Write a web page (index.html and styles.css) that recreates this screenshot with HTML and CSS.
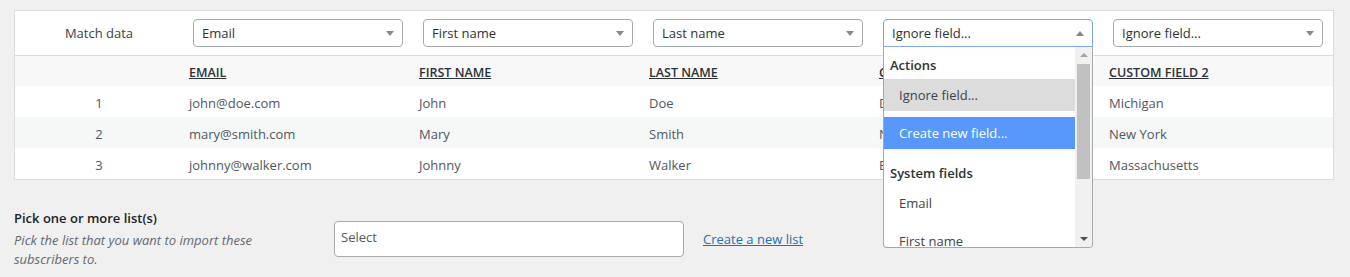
FILE: index.html
```html
<!DOCTYPE html>
<html lang="en">
<head>
  <meta charset="UTF-8">
  <title>Import subscribers</title>
  <link rel="stylesheet" href="styles.css">
</head>
<body>
  <div class="match-card">
    <table class="match-table">
      <colgroup>
        <col class="col-num">
        <col><col><col><col><col>
      </colgroup>
      <thead>
        <tr class="match-row">
          <th class="num">Match data</th>
          <th><div class="field-select">Email<span class="caret"></span></div></th>
          <th><div class="field-select">First name<span class="caret"></span></div></th>
          <th><div class="field-select">Last name<span class="caret"></span></div></th>
          <th>
            <div class="select-wrap">
              <div class="field-select open">Ignore field...<span class="caret up"></span></div>
              <div class="dropdown">
                <ul class="options">
                  <li class="group">Actions</li>
                  <li class="option selected">Ignore field...</li>
                  <li class="option hover">Create new field...</li>
                  <li class="group">System fields</li>
                  <li class="option">Email</li>
                  <li class="option">First name</li>
                  <li class="option">Last name</li>
                </ul>
                <div class="scrollbar">
                  <span class="arrow up"></span>
                  <span class="thumb"></span>
                  <span class="arrow down"></span>
                </div>
              </div>
            </div>
          </th>
          <th><div class="field-select">Ignore field...<span class="caret"></span></div></th>
        </tr>
        <tr class="head-row">
          <th></th>
          <th><span class="col-name">Email</span></th>
          <th><span class="col-name">First name</span></th>
          <th><span class="col-name">Last name</span></th>
          <th><span class="col-name">Custom field 1</span></th>
          <th><span class="col-name">Custom field 2</span></th>
        </tr>
      </thead>
      <tbody>
        <tr>
          <td class="num">1</td>
          <td>john@doe.com</td>
          <td>John</td>
          <td>Doe</td>
          <td>Detroit</td>
          <td>Michigan</td>
        </tr>
        <tr class="alt">
          <td class="num">2</td>
          <td>mary@smith.com</td>
          <td>Mary</td>
          <td>Smith</td>
          <td>New York City</td>
          <td>New York</td>
        </tr>
        <tr>
          <td class="num">3</td>
          <td>johnny@walker.com</td>
          <td>Johnny</td>
          <td>Walker</td>
          <td>Boston</td>
          <td>Massachusetts</td>
        </tr>
      </tbody>
    </table>
  </div>

  <div class="list-row">
    <div class="list-label">
      <div class="list-title">Pick one or more list(s)</div>
      <p class="list-desc">Pick the list that you want to import these subscribers to.</p>
    </div>
    <div class="list-field">
      <div class="list-select">Select</div>
      <a class="new-list" href="#">Create a new list</a>
    </div>
  </div>
</body>
</html>
```

FILE: styles.css
```css
* { margin: 0; padding: 0; box-sizing: border-box; }
body {
  margin: 0;
  padding: 10px 16px 0 14px;
  background: #f0f0f1;
  font-family: "Open Sans", "Noto Sans", sans-serif;
  font-size: 13px;
  color: #50575e;
}

/* Mapping table */
.match-card { width: 1320px; border: 1px solid #dcdcde; background: #fff; }
.match-table { width: 1318px; border-collapse: collapse; table-layout: fixed; }
.match-table col { width: 230px; }
.match-table col.col-num { width: 168px; }
.match-table th, .match-table td { text-align: left; font-weight: normal; padding: 2px 0 0 6px; white-space: nowrap; }
.match-table .num { text-align: center; padding: 2px 0 0; }
.match-table .match-row th { padding-top: 0; }

.match-row { height: 44px; border-bottom: 1px solid #dcdcde; }
.match-row th { vertical-align: middle; color: #3c434a; }
.head-row { height: 31px; background: #f8f8f8; }
.head-row th { color: #2c3338; }
.col-name { text-transform: uppercase; text-decoration: underline; font-weight: 600; font-size: 12.5px; }
tbody tr { height: 31px; }
tbody tr.alt { background: #f6f7f7; }

.field-select {
  position: relative;
  width: 210px;
  height: 28px;
  margin-left: 4px;
  padding: 0 24px 0 8px;
  border: 1px solid #a7aaad;
  border-radius: 4px;
  line-height: 27px;
  color: #2c3338;
  background: #fff;
}
.caret {
  position: absolute;
  right: 8px;
  top: 11px;
  border-left: 4px solid transparent;
  border-right: 4px solid transparent;
  border-top: 5px solid #888;
}
.caret.up { border-top: 0; border-bottom: 5px solid #888; }

.select-wrap { position: relative; }
.field-select.open { border-color: #80a9ea; border-radius: 4px 4px 0 0; }
.dropdown {
  position: absolute;
  left: 4px;
  top: 28px;
  width: 210px;
  height: 201px;
  z-index: 5;
  display: flex;
  background: #fff;
  border: 1px solid #a7aaad;
  border-top: 0;
  border-radius: 0 0 4px 4px;
  overflow: hidden;
}
.options { flex: 1; list-style: none; color: #3c434a; }
.options .group { height: 32px; line-height: 32px; padding: 2px 0 0 6px; font-weight: 600; color: #2c3338; }
.options .option { height: 32px; line-height: 33px; padding-left: 15px; margin-bottom: 6px; }
.options .selected { background: #dcdcdc; }
.options .hover { background: #5897fb; color: #fff; }

.scrollbar { width: 17px; background: #f1f1f1; display: flex; flex-direction: column; align-items: center; }
.scrollbar .arrow { margin: 6px 0; border-left: 4px solid transparent; border-right: 4px solid transparent; }
.scrollbar .arrow.up { border-bottom: 4px solid #a3a3a3; }
.scrollbar .arrow.down { border-top: 4px solid #505050; margin-top: auto; }
.scrollbar .thumb { width: 13px; height: 115px; margin-top: 1px; background: #c1c1c1; }

/* List picker */
.list-row { display: flex; margin-top: 28px; }
.list-label { width: 320px; }
.list-title { line-height: 20px; font-weight: 600; color: #1d2327; }
.list-desc { width: 260px; margin-top: 3px; line-height: 19px; font-style: italic; color: #646970; }
.list-field { display: flex; align-items: center; padding-top: 13px; align-self: flex-start; }
.list-select {
  width: 350px;
  height: 36px;
  padding: 5px 6px;
  border: 1px solid #a7aaad;
  border-radius: 4px;
  background: #fff;
  color: #50575e;
  line-height: 20px;
}
.new-list { margin-left: 19px; color: #2271b1; text-decoration: underline; }
```
